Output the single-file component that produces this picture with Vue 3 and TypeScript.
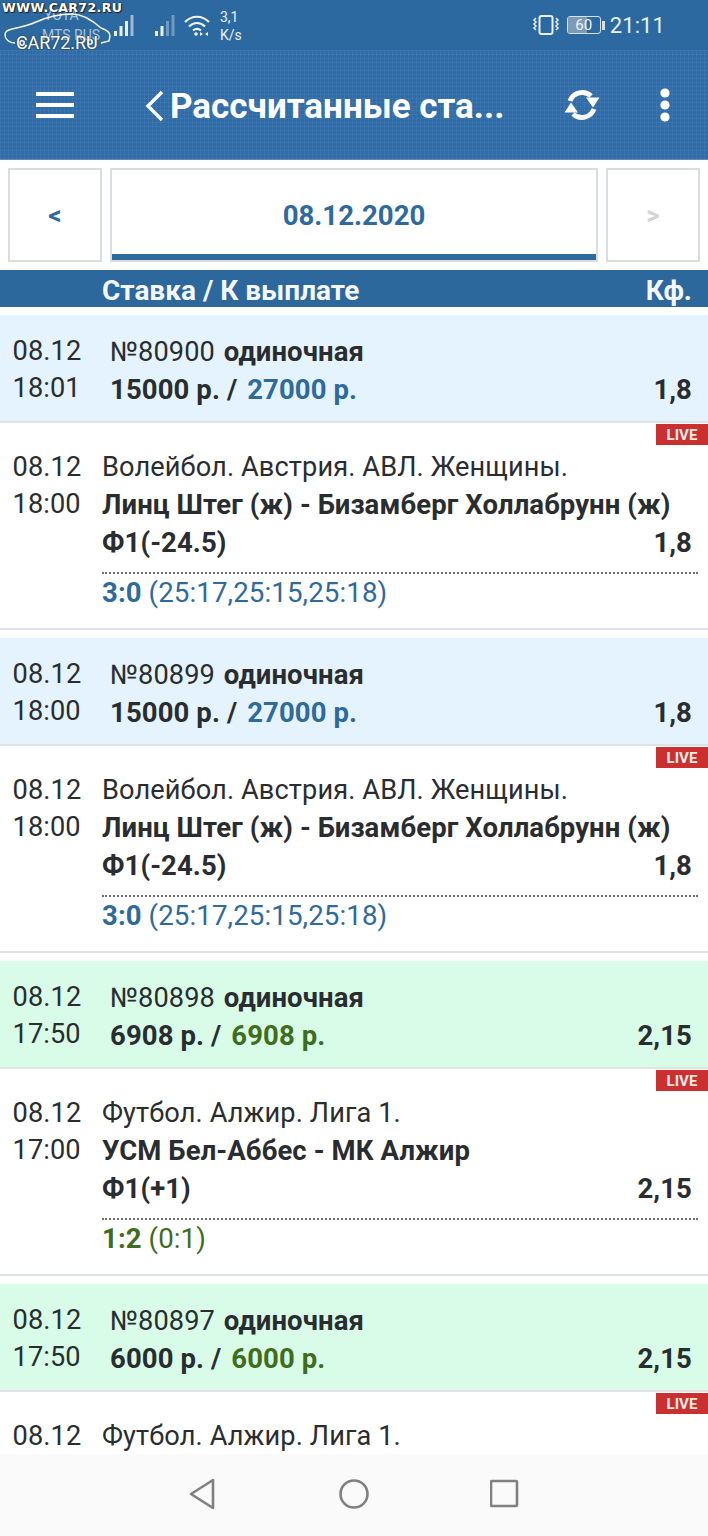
<template>
  <div class="screen">
    <div class="status">
      <div class="carriers">
        <span>YOTA</span>
        <span>MTS RUS</span>
      </div>
      <svg class="signal s1" width="24" height="24" viewBox="0 0 24 24">
        <rect x="1" y="18" width="3" height="5" fill="#e6eef6" />
        <rect x="6.500" y="13" width="3" height="10" fill="#e6eef6" />
        <rect x="12" y="8" width="3" height="15" fill="#e6eef6" />
        <rect x="17.500" y="2" width="3" height="21" fill="#9dbbd7" />
      </svg>
      <svg class="signal s2" width="24" height="24" viewBox="0 0 24 24">
        <rect x="1" y="18" width="3" height="5" fill="#e6eef6" />
        <rect x="6.500" y="13" width="3" height="10" fill="#e6eef6" />
        <rect x="12" y="8" width="3" height="15" fill="#6f9ac2" />
        <rect x="17.500" y="2" width="3" height="21" fill="#6f9ac2" />
      </svg>
      <svg class="wifi" width="26" height="22" viewBox="0 0 26 22" fill="none" stroke="#eef4fa" stroke-width="2.200">
        <path d="M1 7c7-7 17-7 24 0" />
        <path d="M5 11.500c5-4.500 11-4.500 16 0" />
        <path d="M9 15.500c2.500-2 5.500-2 8 0" />
        <circle cx="12" cy="19" r="1.800" fill="#eef4fa" stroke="none" />
        <path d="M16 17l3 2-3 2zM24 17l-3 2 3 2z" fill="#eef4fa" stroke="none" />
      </svg>
      <div class="speed">3,1<br />K/s</div>
      <div class="spacer"></div>
      <svg class="vibrate" width="28" height="24" viewBox="0 0 28 24" fill="none" stroke="#e8f0f7">
        <rect x="7.500" y="3" width="13" height="18" rx="2" stroke-width="2" />
        <path d="M4 5l-2 2 2 2-2 2 2 2-2 2 2 2M24 5l2 2-2 2 2 2-2 2 2 2-2 2" stroke-width="1.500" />
      </svg>
      <div class="battery">
        <div class="battery-body"><span class="battery-fill"></span><span class="battery-num">60</span></div>
        <i></i>
      </div>
      <div class="time">21:11</div>
      <div class="mark">
        <div class="mark-url">WWW.CAR72.RU</div>
        <svg class="mark-car" width="130" height="52" viewBox="0 0 130 52" fill="none" stroke="#fff" stroke-width="1.400">
          <path d="M15 43C9 43 5 39 5 35c0-4 3-5 7-6 10-2 18-4 24-7 9-4 22-8 36-8 10 0 20 6 29 14 6 2 9 4 9 8l-1 5-8 2" />
          <circle cx="22" cy="43" r="2.200" stroke-width="1.600" />
          <circle cx="90" cy="42" r="2.200" stroke-width="1.600" />
        </svg>
        <div class="mark-name">CAR72.RU</div>
      </div>
    </div>

    <header class="topbar">
      <svg class="menu" width="38" height="28" viewBox="0 0 38 28" fill="#fff">
        <rect y="1" width="38" height="4" />
        <rect y="12" width="38" height="4" />
        <rect y="23" width="38" height="4" />
      </svg>
      <svg class="back" width="20" height="32" viewBox="0 0 20 32" fill="none" stroke="#fff" stroke-width="3.400">
        <path d="M17 2L3 16l14 14" />
      </svg>
      <div class="title">Рассчитанные ста...</div>
      <svg class="refresh" width="36" height="36" viewBox="0 0 36 36" fill="#fff">
        <path d="M6 14A13 13 0 0 1 27 9" fill="none" stroke="#fff" stroke-width="5" />
        <path d="M22 10.500h13.500L29 20.500z" />
        <path d="M30 22A13 13 0 0 1 9 27" fill="none" stroke="#fff" stroke-width="5" />
        <path d="M14 25.500H0.500L7 15.500z" />
      </svg>
      <svg class="dots" width="12" height="34" viewBox="0 0 12 34" fill="#fff">
        <circle cx="6" cy="5" r="4.600" />
        <circle cx="6" cy="17" r="4.600" />
        <circle cx="6" cy="29" r="4.600" />
      </svg>
    </header>

    <nav class="dates">
      <div class="arrow">&lt;</div>
      <div class="current">08.12.2020</div>
      <div class="arrow off">&gt;</div>
    </nav>

    <div class="thead">
      <span>Ставка / К выплате</span>
      <span>Кф.</span>
    </div>

    <main class="list">
      <section v-for="b in bets" :key="b.num" :class="['bet', { won: b.won }]">
        <div class="head">
          <div class="when">{{ b.date }}<br />{{ b.time }}</div>
          <div class="head-main">
            <div>№{{ b.num }} <b class="kind">одиночная</b></div>
            <div class="head-sum">
              <b class="stake">{{ b.stake }} р. /</b>
              <b class="payout">{{ b.payout }} р.</b>
              <b class="k">{{ b.k }}</b>
            </div>
          </div>
        </div>
        <div class="event">
          <span class="live">LIVE</span>
          <div class="when">{{ b.date }}<br />{{ b.evTime }}</div>
          <div class="event-main">
            <div>{{ b.league }}</div>
            <div><b>{{ b.match }}</b></div>
            <div class="pick">
              <b>{{ b.pick }}</b>
              <b>{{ b.k }}</b>
            </div>
            <div class="score">
              <b>{{ b.score }}</b> {{ b.sets }}
            </div>
          </div>
        </div>
      </section>
    </main>

    <footer class="sysnav">
      <svg width="30" height="34" viewBox="0 0 30 34" fill="none" stroke="#808080" stroke-width="2.600" stroke-linejoin="round">
        <path d="M25 3v28L3 17z" />
      </svg>
      <svg width="32" height="32" viewBox="0 0 32 32" fill="none" stroke="#808080" stroke-width="2.600">
        <circle cx="16" cy="16" r="13.500" />
      </svg>
      <svg width="30" height="30" viewBox="0 0 30 30" fill="none" stroke="#808080" stroke-width="2.600" stroke-linejoin="round">
        <rect x="1" y="2" width="26" height="25" rx="1" />
      </svg>
    </footer>
  </div>
</template>

<script setup lang="ts">
interface Bet {
  num: string;
  date: string;
  time: string;
  evTime: string;
  stake: string;
  payout: string;
  k: string;
  league: string;
  match: string;
  pick: string;
  score: string;
  sets: string;
  won: boolean;
}

const volley = {
  evTime: "18:00",
  stake: "15000",
  payout: "27000",
  k: "1,8",
  league: "Волейбол. Австрия. АВЛ. Женщины.",
  match: "Линц Штег (ж) - Бизамберг Холлабрунн (ж)",
  pick: "Ф1(-24.5)",
  score: "3:0",
  sets: "(25:17,25:15,25:18)",
  won: false,
};

const football = {
  evTime: "17:00",
  k: "2,15",
  league: "Футбол. Алжир. Лига 1.",
  match: "УСМ Бел-Аббес - МК Алжир",
  pick: "Ф1(+1)",
  score: "1:2",
  sets: "(0:1)",
  won: true,
};

const bets: Bet[] = [
  { ...volley, num: "80900", date: "08.12", time: "18:01" },
  { ...volley, num: "80899", date: "08.12", time: "18:00" },
  { ...football, num: "80898", date: "08.12", time: "17:50", stake: "6908", payout: "6908" },
  { ...football, num: "80897", date: "08.12", time: "17:50", stake: "6000", payout: "6000" },
];
</script>

<style>
html,
body {
  margin: 0;
  background: #fff;
}
</style>

<style scoped>
.screen {
  width: 708px;
  height: 1536px;
  display: flex;
  flex-direction: column;
  overflow: hidden;
  font-family: Roboto, "Liberation Sans", sans-serif;
  color: #2a2d30;
  background: #fff;
}

.status {
  position: relative;
  height: 50px;
  flex: none;
  display: flex;
  align-items: center;
  padding-left: 113px;
  padding-right: 43px;
  box-sizing: border-box;
  background: #2c69a0;
  color: #e8f0f7;
}
.carriers {
  position: absolute;
  left: 42px;
  top: 5px;
  font-size: 14px;
  line-height: 20px;
  color: #a9c4dd;
  display: flex;
  flex-direction: column;
}
.carriers span:first-child {
  margin-left: 2px;
}
.signal {
  flex: none;
  margin-top: -1px;
}
.s2 {
  margin-left: 17px;
}
.wifi {
  margin-left: 6px;
  margin-top: 1px;
  flex: none;
}
.speed {
  margin-left: 10px;
  font-size: 14px;
  line-height: 18px;
  margin-top: 2px;
}
.spacer {
  flex: 1;
}
.vibrate {
  flex: none;
  margin-right: 7px;
}
.battery {
  display: flex;
  align-items: center;
  margin-right: 5px;
}
.battery-body {
  position: relative;
  width: 32px;
  height: 16px;
  border: 1px solid #d5e2ee;
  border-radius: 3px;
  overflow: hidden;
}
.battery-fill {
  position: absolute;
  left: 0;
  top: 0;
  bottom: 0;
  width: 60%;
  background: #7d9ab6;
}
.battery-num {
  position: relative;
  display: block;
  text-align: center;
  font-size: 15px;
  line-height: 17px;
  color: #eef4fa;
}
.battery i {
  width: 3px;
  height: 9px;
  margin-left: 1px;
  background: #d5e2ee;
}
.time {
  font-size: 22px;
  letter-spacing: 0.1px;
}
.mark {
  position: absolute;
  left: 0;
  top: 0;
  width: 130px;
  height: 50px;
  color: #fff;
}
.mark-url {
  position: absolute;
  left: 2px;
  top: 0;
  font-family: "DejaVu Sans", sans-serif;
  font-weight: 700;
  font-size: 12.500px;
  line-height: 16px;
  letter-spacing: 0.4px;
  white-space: nowrap;
  text-shadow: 0 0 2px #222, 1px 1px 1px #222;
}
.mark-car {
  position: absolute;
  left: 0;
  top: 0;
}
.mark-name {
  position: absolute;
  left: 16px;
  top: 33px;
  font-size: 18px;
  line-height: 20px;
  letter-spacing: -0.1px;
  text-shadow: 0 0 2px #222;
}

.topbar {
  height: 110px;
  flex: none;
  display: flex;
  align-items: center;
  box-sizing: border-box;
  border-bottom: 1px solid #5d8bb6;
  background-color: #2f6ca8;
  background-image: repeating-linear-gradient(0deg, rgba(255, 255, 255, 0.05) 0 1px, transparent 1px 4px),
    repeating-linear-gradient(90deg, rgba(255, 255, 255, 0.05) 0 1px, transparent 1px 4px);
}
.menu {
  margin-left: 36px;
  flex: none;
}
.back {
  margin-left: 71px;
  flex: none;
  margin-top: 2px;
}
.title {
  margin-left: 5px;
  margin-top: 4px;
  width: 370px;
  flex: none;
  font-size: 35px;
  font-weight: 700;
  color: #fff;
  white-space: nowrap;
}
.refresh {
  margin-left: 24px;
  flex: none;
}
.dots {
  margin-left: 58.500px;
  flex: none;
}

.dates {
  height: 110px;
  flex: none;
  box-sizing: border-box;
  padding: 8px;
  display: flex;
  gap: 8px;
  background: #fff;
}
.arrow,
.current {
  box-sizing: border-box;
  display: flex;
  align-items: center;
  justify-content: center;
  border: 2px solid #dadde0;
  font-weight: 700;
  color: #2f6a9c;
}
.arrow {
  width: 94px;
  font-size: 26px;
}
.arrow.off {
  color: #d2d4d6;
}
.current {
  flex: 1;
  font-size: 27.600px;
  box-shadow: inset 0 -6px 0 #2f6a9c;
}

.thead {
  height: 37px;
  flex: none;
  box-sizing: border-box;
  padding: 3px 16px 0 102px;
  display: flex;
  align-items: center;
  justify-content: space-between;
  background: #2c689c;
  color: #f4f7fa;
  font-size: 28px;
  font-weight: 700;
}

.list {
  flex: 1;
  min-height: 0;
  overflow: hidden;
  padding-top: 8px;
}
.bet {
  margin-bottom: 8px;
  font-size: 27.200px;
  line-height: 37px;
  letter-spacing: 0.1px;
}
.bet b {
  font-size: 27.500px;
}
.when {
  width: 89.500px;
  flex: none;
  padding-left: 12.500px;
}
.head {
  height: 108px;
  box-sizing: border-box;
  display: flex;
  padding-top: 18px;
  background: #e4f3fd;
  border-bottom: 2px solid #dfe3e6;
}
.won .head {
  background: #d8fce8;
}
.head-main {
  flex: 1;
  margin-left: 8px;
  padding-right: 16px;
}
.kind {
  margin-left: 2px;
}
.head-sum {
  display: flex;
}
.stake {
  margin-right: 10px;
}
.payout {
  color: #2f6a9c;
  flex: 1;
}
.won .payout {
  color: #3f6d1c;
}
.event {
  position: relative;
  height: 207px;
  box-sizing: border-box;
  display: flex;
  padding-top: 26px;
  border-bottom: 2px solid #dfe2e4;
}
.live {
  position: absolute;
  right: 0;
  top: 1px;
  width: 52px;
  height: 21px;
  background: #c9302f;
  color: #f7e9e9;
  font-size: 15px;
  line-height: 22px;
  font-weight: 700;
  text-align: center;
}
.event-main {
  flex: 1;
  padding-right: 16px;
}
.pick {
  display: flex;
  justify-content: space-between;
  padding-bottom: 11px;
}
.score {
  margin-right: -6px;
  border-top: 2px dotted #6b6f73;
  color: #2f6a9c;
  font-size: 27.700px;
  line-height: 37px;
}
.won .score {
  color: #3f6d1c;
}

.sysnav {
  height: 82px;
  flex: none;
  display: flex;
  align-items: center;
  justify-content: center;
  gap: 120px;
  padding-bottom: 2px;
  box-sizing: border-box;
  background: #fafafa;
}
</style>
